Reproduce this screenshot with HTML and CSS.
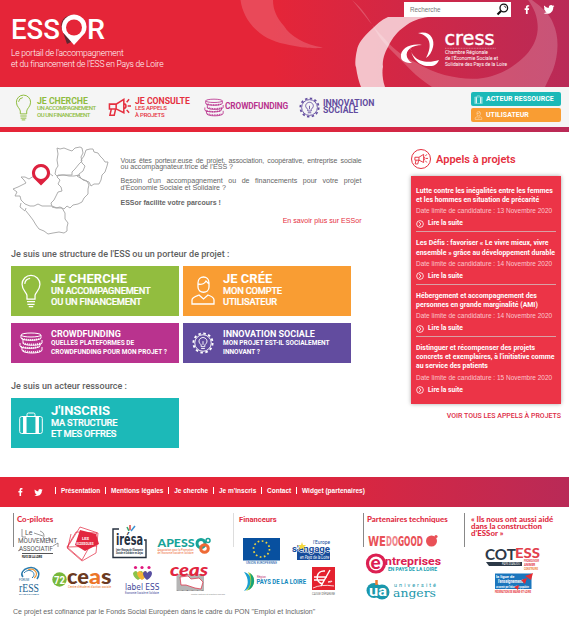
FILE: index.html
```html
<!DOCTYPE html>
<html lang="fr">
<head>
<meta charset="utf-8">
<title>ESSOR</title>
<link rel="stylesheet" href="styles.css">
</head>
<body>
<svg class="defs" aria-hidden="true">
  <symbol id="bulb" viewBox="0 0 24 38"><g fill="none" stroke="currentColor" stroke-width="1.4"><path d="M7.5 28V24C7 20 2 18 2 11.5a10 10 0 0 1 20 0C22 18 17 20 16.5 24v4zM7.5 31h9M8 34h8M9.500 36.500h5M5 11a7 7 0 0 1 6-6"/></g></symbol>
  <symbol id="horn" viewBox="0 0 24 20"><g fill="none" stroke="currentColor" stroke-width="1.600"><path d="M1.500 7h7l8-5v14l-8-4h-7zM3.500 12L2 18.500h4.500L8 12M8.500 7v5M16.500 6.500c3 0 3 5 0 5M19.500 5l2.500-3M20.500 9H24M19.500 13l2.500 3"/></g></symbol>
  <symbol id="coins" viewBox="0 0 24 22"><g fill="none" stroke="currentColor" stroke-width="1"><ellipse cx="12" cy="3" rx="10" ry="2"/><path d="M2 3v3c0 3 20 3 20 0V3M4 8v3c0 3 19 3 19 0V8M1 11v3c0 3 20 3 20 0v-3M3 15v3c0 4 20 4 20 0v-3"/><path stroke-dasharray="1 1" stroke-width="1.800" d="M3 6.500c4 2 14 2 18 0M4 11c4 2 14 2 18 0M2 14.500c4 2 14 2 18 0M4 18.500c4 2 14 2 18 0"/></g></symbol>
  <symbol id="gear" viewBox="0 0 24 24"><g fill="none" stroke="currentColor"><circle cx="12" cy="12" r="9" stroke-width="1"/><circle cx="12" cy="12" r="10.500" stroke-width="2" stroke-dasharray="2.750 2.750"/><path d="M10 16v-2c-5-4-1-8 2-8s7 4 2 8v2zM10 18h4M12 14v-4"/></g></symbol>
  <symbol id="case" viewBox="0 0 24 22"><g fill="none" stroke="currentColor"><rect x=".7" y="4.500" width="22.600" height="17" rx="2"/><path d="M8 4V2.500Q8 1 9.500 1h5Q16 1 16 2.500V4"/><path stroke-width="3.500" d="M5.800 5v16M18.200 5v16"/></g></symbol>
  <symbol id="user" viewBox="0 0 24 30"><g fill="none" stroke="currentColor" stroke-width="1.300"><path d="M7 7c0-8 11-8 11 0v4c0 7-11 7-11 0zM7 8c4 1 7-1 8-3l3 3M1 28v-4c0-3 4-4 7-5l4.500 4 4.500-4c3 1 6 2 6 5v4z"/></g></symbol>
  <symbol id="fb" viewBox="0 0 8 14"><path fill="currentColor" d="M2.300 14V7.800H.3V5.200h2V3.500C2.300 1 3.600.2 5.400.2h2v2.300H6c-.8 0-1 .4-1 1.100v1.600h2.300L7 7.800H5V14z"/></symbol>
  <symbol id="tw" viewBox="0 0 24 20"><path fill="currentColor" d="M24 2.400l-2.500 2.500C21.700 14 15 19.700 7.500 19.700 4.800 19.700 2 19 0 17.500c2.600.2 5-.4 7-2-2-.1-3.900-1.400-4.500-3.400h2.200C2.300 11.500.8 9.500.8 7.100L3 7.700C.8 6 .2 3.300 1.600 1.100c2.500 3 6 5 10.200 5.200C11 2.600 13.500 0 16.700 0c1.400 0 2.600.6 3.500 1.500L23.400.4 21.500 3z"/></symbol>
  <symbol id="more" viewBox="0 0 10 10"><g fill="none" stroke="currentColor"><circle cx="5" cy="5" r="4.200"/><path d="M4 2.500L6 5 4 7.500"/></g></symbol>
</svg>

<header class="top">
  <svg class="swoosh" viewBox="0 0 569 87" aria-hidden="true">
    <g fill="#fff">
      <path opacity=".17" d="M240.500 0C243 19 258 39 285 44C301 48 317 49 323 47.500C305 45 290 36 284 26C277 18 273 10 273 0z"/>
      <path opacity=".2" d="M352 0C364 14 374 28 383 37C396 52 406 58 417 63C438 76 465 81 483 78C495 76 503 72 510 68C519 62 526 56 530 50C542 34 539 14 528 0H532C543 8 550 15 553 23C560 38 558 56 553 70L545 87H432C420 79 411 71 403 62C390 49 382 42 377 33C369 19 362 8 352 0z"/>
      <path opacity=".72" d="M388 17C381 20 376 25 373 28C362 38 358 44 357 50C355 58 355 66 356 67C357 75 359 82 361 87H385C381 75 383 66 383 67C382 60 385 52 388 47C392 38 398 31 404 27C411 21 420 18 428 17z"/>
    </g>
  </svg>
  <div class="brand">
    <svg class="logo" viewBox="0 0 100 32">
      <path fill="#5d2630" d="M61 1C51 2 48 10 52 18l4 12 4-2z"/>
      <text x="0" y="24.500" font-size="28.500" textLength="49" lengthAdjust="spacingAndGlyphs">ESS</text>
      <path fill="#fff" d="M63 .5a12.500 12.500 0 0 0-11 18L63 31l11-12A12.500 12.500 0 0 0 63 .5z"/><circle cx="63" cy="13.500" r="8" fill="#e52538"/>
      <text x="76" y="24.500" font-size="28.500" textLength="18" lengthAdjust="spacingAndGlyphs">R</text>
    </svg>
    <p class="tagline">Le portail de l'accompagnement<br><span>et du financement de l'ESS en Pays de Loire</span></p>
  </div>
  <div class="tools">
    <div class="searchline">
      <div class="search"><span>Recherche</span>
        <svg width="13" height="13" viewBox="0 0 13 13"><g fill="none" stroke="#111"><circle cx="7.800" cy="5" r="3.800" stroke-width="1.300"/><path stroke-width="2.200" d="M5 8l-3.500 3.500"/><path stroke-width=".7" d="M7.800 3q2 0 2 2"/></g></svg>
      </div>
      <svg class="fb"><use href="#fb"/></svg>
      <svg class="tw"><use href="#tw"/></svg>
    </div>
    <svg class="cress" viewBox="400 28 110 42">
      <g fill="#fff">
        <path d="M418 33c12-3 17 6 15 14-1 5-4 9-7 11 5-9 7-22-8-25zM401 57c-1-8 9-14 21-12-10 0-17 5-15 12 1 3 3 5 5 6-6 0-11-2-11-6zM411 46c-2 10 10 20 28 14-2 4-4 6-9 6-10 1-20-8-19-20z"/>
        <text class="din" x="444.500" y="44.500" font-size="20" textLength="50" lengthAdjust="spacingAndGlyphs">cress</text>
        <g class="small" font-size="5.200"><text x="445" y="54" textLength="43" lengthAdjust="spacingAndGlyphs">Chambre Régionale</text>
        <text x="445" y="60" textLength="53" lengthAdjust="spacingAndGlyphs">de l'Économie Sociale et</text>
        <text x="445" y="66" textLength="62" lengthAdjust="spacingAndGlyphs">Solidaire des Pays de la Loire</text></g>
      </g>
      <path stroke="#f0a8b5" stroke-width=".6" stroke-dasharray="1 .6" d="M445 48.300h51"/>
    </svg>
  </div>
</header>

<nav class="nav">
  <a class="n1"><svg><use href="#bulb"/></svg><span><b>JE CHERCHE</b><i>UN ACCOMPAGNEMENT</i><i>OU UN FINANCEMENT</i></span></a>
  <a class="n2"><svg><use href="#horn"/></svg><span><b>JE CONSULTE</b><i>LES APPELS</i><i>À PROJETS</i></span></a>
  <a class="n3"><svg><use href="#coins"/></svg><span><b>CROWDFUNDING</b></span></a>
  <a class="n4"><svg><use href="#gear"/></svg><span><b>INNOVATION</b><b>SOCIALE</b></span></a>
  <div class="accounts">
    <a class="teal"><svg><use href="#case"/></svg>ACTEUR RESSOURCE</a>
    <a class="orange"><svg><use href="#user"/></svg>UTILISATEUR</a>
  </div>
</nav>
<div class="strip"></div>

<main class="main">
  <div class="left">
    <section class="intro">
      <svg class="map" viewBox="12 145 98 91">
        <g fill="none" stroke="#a5a5a5" stroke-width=".9" stroke-linejoin="round">
          <path d="M57 148l3 1 4-1 5 2 3 1 3-3 5-1 2 1 1 5-2 4 1 4-3 3-4 5-3 3 0 3-5 0-5 0-5 1-2-2 1-5 2-3-1-6 1-6z"/>
          <path d="M86 150l4-1 3 0 1 3 4 1 2 3 3 3 2 3 3 0-1 4-2 6-3 3-1 5-2 4-5 0-3 2-2-4-6-2-3-3-1-3 4-3 2-5-3-3-1-3 3-4z"/>
          <path d="M77 176l5 3 5 2 2 4-1 4 0 5-4 4-2 4-4 2-5 1-3 3-3-2-3 3-4-2-4 1-4-1-1-4 3-3 2-4 2-4 4-1-1-4-3-3 2-4-3-3 1-2 6 0 5 1 5 0 5-1z"/>
          <path d="M53 176l-4-3M34 176l-5 3-4-2-4 0 3 3 2 3-4 2-4 2-5 2 4 3-2 4 5 0 1 4 4 4 5 2 4 0 4-2 4 2 5 0 4 0"/>
          <path d="M21 203l-1 4 5 4 1-3M26 211l4 5 3 4 3 5 3 4 5 2 4 3 5-1 6-1 5 1 3-2 0-4 1-4-3-4 0-6-3-5-5 0-5-2"/>
        </g>
        <path fill="#dd213e" fill-rule="evenodd" d="M41 164a9 9 0 0 0-7.500 14L41 185.500l7.500-7.500A9 9 0 0 0 41 164zm0 3a6 6 0 0 1 0 12 6 6 0 0 1 0-12z"/>
      </svg>
      <div class="pitch">
        <p><span class="line">Vous êtes porteur.euse de projet, association, coopérative, entreprise sociale</span> ou accompagnateur.trice de l'ESS ?</p>
        <p>Besoin d'un accompagnement ou de financements pour votre projet d'Économie Sociale et Solidaire ?</p>
        <p class="strong">ESSor facilite votre parcours !</p>
        <p class="link">En savoir plus sur ESSor</p>
      </div>
    </section>
    <h2 class="h-a">Je suis une structure de l'ESS ou un porteur de projet :</h2>
    <div class="tiles">
      <a class="tile green"><svg class="i-bulb"><use href="#bulb"/></svg><span><b>JE CHERCHE</b><i>UN ACCOMPAGNEMENT</i><i>OU UN FINANCEMENT</i></span></a>
      <a class="tile orange"><svg class="i-user"><use href="#user"/></svg><span><b>JE CRÉE</b><i>MON COMPTE</i><i>UTILISATEUR</i></span></a>
      <a class="tile short magenta"><svg class="i-coins"><use href="#coins"/></svg><span><b>CROWDFUNDING</b><i>QUELLES PLATEFORMES DE</i><i>CROWDFUNDING POUR MON PROJET ?</i></span></a>
      <a class="tile short violet"><svg class="i-gear"><use href="#gear"/></svg><span><b>INNOVATION SOCIALE</b><i>MON PROJET EST-IL SOCIALEMENT</i><i>INNOVANT ?</i></span></a>
    </div>
    <h2 class="h-b">Je suis un acteur ressource :</h2>
    <div class="tiles">
      <a class="tile teal"><svg class="i-case"><use href="#case"/></svg><span><b>J'INSCRIS</b><i>MA STRUCTURE</i><i>ET MES OFFRES</i></span></a>
    </div>
  </div>

  <aside class="calls">
    <h2><span class="ring"><svg><use href="#horn"/></svg></span>Appels à projets</h2>
    <div class="card">
      <article><h3>Lutte contre les inégalités entre les femmes<br>et les hommes en situation de précarité</h3><p>Date limite de candidature : 13 Novembre 2020</p><a><svg><use href="#more"/></svg>Lire la suite</a></article>
      <article><h3>Les Défis : favoriser « Le vivre mieux, vivre<br>ensemble » grâce au développement durable</h3><p>Date limite de candidature : 14 Novembre 2020</p><a><svg><use href="#more"/></svg>Lire la suite</a></article>
      <article><h3>Hébergement et accompagnement des<br>personnes en grande marginalité (AMI)</h3><p>Date limite de candidature : 14 Novembre 2020</p><a><svg><use href="#more"/></svg>Lire la suite</a></article>
      <article><h3>Distinguer et récompenser des projets<br>concrets et exemplaires, à l'initiative comme<br>au service des patients</h3><p>Date limite de candidature : 15 Novembre 2020</p><a><svg><use href="#more"/></svg>Lire la suite</a></article>
    </div>
    <a class="all">VOIR TOUS LES APPELS À PROJETS</a>
  </aside>
</main>

<div class="footbar">
  <svg class="fb"><use href="#fb"/></svg><svg class="tw"><use href="#tw"/></svg>
  <ul><li>Présentation</li><li>Mentions légales</li><li>Je cherche</li><li>Je m'inscris</li><li>Contact</li><li>Widget (partenaires)</li></ul>
</div>

<footer class="partners">
  <section class="c1">
    <h4>Co-pilotes</h4>
    <div class="logos">
      <svg width="46" height="38" viewBox="16 525 46 38">
        <g fill="none" stroke="#555" stroke-width=".6"><path d="M21 529v8h4M39 531q6 2 3 8M33 533l9 3M20 549l-3 2M48 541v-4M52 546l5-3v4"/></g>
        <g fill="#555"><text x="24" y="535" font-size="7">Le</text><text x="17" y="543" font-size="7" textLength="39" lengthAdjust="spacingAndGlyphs">MOUVEMENT</text><text x="18" y="551" font-size="7" textLength="34" lengthAdjust="spacingAndGlyphs">ASSOCIATIF</text></g>
        <path stroke="#555" d="M21 553.500h31"/><text x="21" y="558" font-size="3.200" font-weight="700" textLength="20" lengthAdjust="spacingAndGlyphs">PAYS DE LA LOIRE</text>
      </svg>
      <svg width="45" height="38" viewBox="62 525 45 38">
        <path fill="none" stroke="#e2263f" stroke-width=".7" d="M79 527l18 6-2 20-14 8-15-13zM66 547l9-15 21 1-15 27zM70 534l-3 13 29-1"/>
        <path fill="#e2263f" d="M79 530l16 4 3 10-14 7-10-6z"/>
        <g fill="#fff" font-size="4" font-weight="700"><text x="81" y="540">LES</text><text x="75.500" y="545" textLength="17" lengthAdjust="spacingAndGlyphs">ECOSSOLIES</text></g>
      </svg>
      <svg width="45" height="38" viewBox="107 525 45 38">
        <path fill="none" stroke="#26313f" stroke-width="1.400" d="M118 529h-6v28.500h33V540H143"/>
        <text class="cond" x="115" y="545" font-size="16" font-weight="700" fill="#26313f" textLength="27" lengthAdjust="spacingAndGlyphs">irésa</text>
        <path stroke="#3aa66b" stroke-width="1.500" d="M128 531l-2-4"/><path stroke="#e2463f" stroke-width="1.500" d="M129 530v-5"/><path stroke="#3b8fd0" stroke-width="1.500" d="M130 531l4-5"/>
        <g font-size="2.800" font-weight="700" fill="#26313f"><text x="115" y="550.500" textLength="27" lengthAdjust="spacingAndGlyphs">Inter-Réseau de l'Économie</text><text x="115" y="554" textLength="27" lengthAdjust="spacingAndGlyphs">Sociale et Solidaire en Anjou</text></g>
      </svg>
      <svg width="64" height="38" viewBox="152 525 64 38">
        <text class="lato" x="156.500" y="547" font-size="11" font-weight="900" fill="#17a398" textLength="37" lengthAdjust="spacingAndGlyphs">APESS</text>
        <g fill="none" stroke-width="3"><circle cx="200" cy="543.500" r="4" stroke="#17a398"/><circle cx="203.500" cy="548.500" r="3.800" stroke="#ee6a35"/><circle cx="207" cy="540.500" r="2" stroke="#17a398" stroke-width="1.500"/></g>
        <g font-size="2.800" fill="#ee6a35"><text x="156.500" y="550.500" textLength="36" lengthAdjust="spacingAndGlyphs">Association pour la Promotion</text><text x="156.500" y="553.700" textLength="36" lengthAdjust="spacingAndGlyphs">de l'Économie Sociale et Solidaire</text></g>
      </svg>
      <svg width="30" height="37" viewBox="16 563 30 37">
        <path fill="none" stroke="#2d7cad" stroke-width="1.500" d="M36 579c5-7-2-13-9-11-5 1-8 6-5 9"/><path fill="none" stroke="#ef9b3c" stroke-width="1.200" d="M27 570c6-3 12 4 6 8"/><path fill="none" stroke="#2d7cad" d="M23 573c5-6 14 0 8 5"/>
        <text class="serif" x="18" y="591.500" font-size="12" fill="#1d6391" textLength="20" lengthAdjust="spacingAndGlyphs">rESS</text><text x="18" y="581" font-size="3" fill="#1d6391">FORUM</text><text x="18" y="595" font-size="2.500" fill="#1d6391" textLength="20">DU PAYS DU MANS</text>
      </svg>
      <svg width="71" height="37" viewBox="46 563 71 37">
        <circle cx="58.500" cy="579.500" r="7.200" fill="#78b83b"/><text x="53" y="583.500" font-size="11" font-weight="700" fill="#fff" textLength="11" lengthAdjust="spacingAndGlyphs">72</text>
        <g class="lato" font-weight="900" font-size="20"><text x="66" y="583.500" fill="#6b3a20" textLength="22" lengthAdjust="spacingAndGlyphs">ce</text><text x="88" y="583.500" fill="#ec7628" textLength="12" lengthAdjust="spacingAndGlyphs">a</text><text x="100" y="583.500" fill="#6b3a20" textLength="10.500" lengthAdjust="spacingAndGlyphs">s</text></g>
        <text x="67" y="587.500" font-size="2.800" fill="#ec7628" textLength="43" lengthAdjust="spacingAndGlyphs">Centre d'étude et d'action sociale</text>
      </svg>
      <svg width="47" height="37" viewBox="117 563 47 37">
        <g fill="#e0187e"><circle cx="134.500" cy="567.500" r="1.600"/><circle cx="141" cy="567.500" r="1.600"/><circle cx="148" cy="567.500" r="1.600"/></g>
        <path fill="#8bc34a" d="M132 573q3-4 5 0 4-4 5 0 0 4-5 7-5-3-5-7z"/><path fill="#f5b335" d="M136 573q3-4 5 0 4-4 5 0 0 4-5 7-5-3-5-7z"/><path fill="#574ea0" d="M142 573q3-4 4 0 4-4 5 0 0 4-5 7-4-3-4-7z"/>
        <text class="cond" x="124" y="589.500" font-size="9" fill="#3f4799" textLength="34.500" lengthAdjust="spacingAndGlyphs">label ESS</text><text x="124" y="594" font-size="2.800" fill="#3f4799" textLength="34" lengthAdjust="spacingAndGlyphs">Économie Sociale et Solidaire</text>
      </svg>
      <svg width="64" height="37" viewBox="164 563 64 37">
        <path fill="#b5b5b5" d="M175.500 574h27.500v17h-27.500z"/><path fill="#fff" stroke="#e2263f" stroke-width=".7" d="M179 577l8-1 3 3 8-1 4 4-2 7-6-1-9-3-5 0z"/>
        <text class="lato" x="169" y="575.500" font-size="17" font-weight="900" font-style="italic" fill="#e2263f" textLength="38" lengthAdjust="spacingAndGlyphs">ceas</text>
        <g font-size="2.500" fill="#888"><text x="176" y="591" fill="#666" textLength="26">FRANCE</text><text x="190" y="594.500" textLength="34" lengthAdjust="spacingAndGlyphs">centre d'étude et d'action sociale</text></g>
      </svg>
    </div>
  </section>
  <section class="c2">
    <h4>Financeurs</h4>
    <div class="logos">
      <svg width="46" height="38" viewBox="240 527 46 38">
        <path fill="#08509f" d="M243 538h37v22.500h-37z"/><circle cx="261.500" cy="549" r="8" fill="none" stroke="#f4d83c" stroke-width="1.700" stroke-dasharray="1.700 2.489"/><text x="246" y="564" font-size="3.500" fill="#08509f" textLength="31" lengthAdjust="spacingAndGlyphs">UNION EUROPÉENNE</text>
      </svg>
      <svg width="54" height="38" viewBox="286 527 54 38">
        <path fill="#164c9b" d="M297 549l33 2v9h-33z"/><g fill="#164c9b" font-weight="700"><text x="313" y="543.500" font-size="5.500" textLength="17" lengthAdjust="spacingAndGlyphs" font-weight="400">l'Europe</text><text x="292" y="551.500" font-size="9.500" textLength="38" lengthAdjust="spacingAndGlyphs" stroke="#fff" stroke-width="1.200" paint-order="stroke">s'engage</text></g>
        <path fill="#f4d83c" d="M302 542l1 3 3 0-2 2 1 3-3-2-3 2 1-3-2-2h3z"/><text x="300" y="559" font-size="5" font-style="italic" fill="#fff" textLength="29" lengthAdjust="spacingAndGlyphs">en Pays de la Loire</text>
      </svg>
      <svg width="69" height="35" viewBox="240 565 69 35">
        <path fill="#1b9fd0" d="M244 572c9 2 11 15 0 19 5-6 5-12 0-19z"/><path fill="#aacf37" d="M248 572c9 4 8 16-2 19 5-5 6-11 2-19z"/><path fill="#15a37c" d="M250 573c7 5 4 15-2 17 4-5 4-11 2-17z"/>
        <text x="257" y="577.500" font-size="3" fill="#c13a75" textLength="9">Région</text><text x="256.500" y="584" font-size="6.500" font-weight="700" fill="#1388bd" textLength="49.500" lengthAdjust="spacingAndGlyphs">PAYS DE LA LOIRE</text>
      </svg>
      <svg width="31" height="35" viewBox="309 565 31 35">
        <path fill="#e4222f" d="M312 567h23v23h-23z"/><g stroke="#fff" fill="none"><path stroke-width="1.500" d="M325 571c-9-1-11 11-2 13M314 577h13M314 580h10M330 570l-9 16"/><path stroke-width=".8" d="M328 582q6-2 3 0zM313 588q8-4 21-2"/></g><text x="312" y="595" font-size="3" fill="#666" textLength="23" lengthAdjust="spacingAndGlyphs">CAISSE D'ÉPARGNE</text>
      </svg>
    </div>
  </section>
  <section class="c3">
    <h4>Partenaires techniques</h4>
    <div class="logos">
      <svg width="80" height="26" viewBox="365 526 80 26">
        <g class="cond" font-weight="700" font-size="14" fill="#e95157"><text x="369" y="546" textLength="18" lengthAdjust="spacingAndGlyphs">WE</text><text x="387" y="546" textLength="12" lengthAdjust="spacingAndGlyphs" fill="#f0858a">DO</text><text x="399" y="546" textLength="25" lengthAdjust="spacingAndGlyphs">GOOD</text></g><circle cx="432.500" cy="541" r="5.500" fill="#e95157"/><circle cx="437" cy="536.500" r="1.600" fill="#e95157"/>
      </svg>
      <svg width="80" height="25" viewBox="365 552 80 25">
        <circle cx="377" cy="563.500" r="8.500" fill="#fff" stroke="#dc2052" stroke-width="3.200"/><text class="lato" x="371.500" y="568.500" font-size="19" font-weight="900" fill="#dc2052">e</text><text x="386" y="564.500" font-size="11" font-weight="700" fill="#dc2052" textLength="56" lengthAdjust="spacingAndGlyphs">ntreprises</text><text x="389" y="570.500" font-size="4.800" font-weight="700" fill="#1aa1b1" textLength="49" lengthAdjust="spacingAndGlyphs">EN PAYS DE LA LOIRE</text>
      </svg>
      <svg width="80" height="25" viewBox="365 577 80 25">
        <g fill="#1a97ac"><circle cx="375" cy="590.500" r="7.500"/><circle cx="383" cy="592" r="7.500"/></g><path stroke="#ee7b31" stroke-width="2.500" d="M377.500 580v5"/><text x="370" y="596" font-size="14" font-weight="700" fill="#fff" textLength="18" lengthAdjust="spacingAndGlyphs">ua</text><text x="395" y="587" font-size="5.500" fill="#1a97ac" textLength="42">université</text><text class="slab" x="394" y="597" font-size="11.500" fill="#1a97ac" textLength="43" lengthAdjust="spacingAndGlyphs">angers</text>
      </svg>
    </div>
  </section>
  <section class="c4">
    <h4>« Ils nous ont aussi aidé<br>dans la construction<br>d'ESSor »</h4>
    <div class="logos">
      <svg width="80" height="28" viewBox="465 544 80 28">
        <g class="lato" font-size="16"><text x="485" y="560" font-weight="700" fill="#2c3947" textLength="31" lengthAdjust="spacingAndGlyphs">COT</text><text x="515" y="557.500" font-size="14" font-weight="900" fill="#e2404c" textLength="25" lengthAdjust="spacingAndGlyphs">ESS</text></g><path fill="#2c3947" d="M486 562h36v4h-33z"/><text x="502" y="565.300" font-size="3" fill="#fff" textLength="18" lengthAdjust="spacingAndGlyphs">PAYS D'ANJOU</text><g font-size="3" font-weight="700" fill="#e2404c"><text x="524" y="561.500" textLength="15" lengthAdjust="spacingAndGlyphs">PROMOUVOIR</text><text x="524" y="565.500">ANIMER</text><text x="524" y="569.500" fill="#ee7b31" textLength="14" lengthAdjust="spacingAndGlyphs">CONSTRUIRE</text></g>
      </svg>
      <svg width="80" height="24" viewBox="465 572 80 24">
        <path fill="#1b76bd" d="M495 573.500h36.500V589H495z"/><g fill="#fff" font-weight="700"><text x="496" y="577.700" font-size="4">la ligue de</text><text x="498" y="582.500" font-size="4.500" textLength="25" lengthAdjust="spacingAndGlyphs">l'enseignement</text><text x="496" y="588" font-size="3" textLength="33" lengthAdjust="spacingAndGlyphs">un avenir par l'éducation populaire</text></g><g fill="#e52d32"><path d="M533 573l-8 3 6 4zM527 578l-6 2 4 4zM519 585l-5 2 4 3z"/></g><text x="495" y="593" font-size="3" font-weight="700" fill="#e52d32" textLength="36" lengthAdjust="spacingAndGlyphs">FÉDÉRATION DE MAINE-ET-LOIRE</text>
      </svg>
    </div>
  </section>
</footer>
<p class="legal">Ce projet est cofinancé par le Fonds Social Européen dans le cadre du PON "Emploi et Inclusion"</p>
</body>
</html>
```
FILE: styles.css
```css
* { box-sizing: border-box; }
body, p, h2, h3, h4, ul { margin: 0; padding: 0; }
body { width: 569px; height: 625px; overflow: hidden; background: #fff; font-family: Roboto, "Liberation Sans", sans-serif; color: #666; }
i { font-style: normal; }
svg { display: block; flex: none; }
.defs { position: absolute; width: 0; height: 0; }
.top, .strip, .footbar { background: linear-gradient(90deg, #e52538 48%, #b92a57 100%); }

.top { position: relative; height: 87px; display: flex; justify-content: space-between; color: #fff; }
.swoosh { position: absolute; inset: 0; width: 569px; height: 87px; }
.brand { position: relative; padding: 14px 0 0 11px; }
.logo { width: 100px; height: 32px; font-weight: 500; fill: #fff; }
.tagline { font-size: 8.5px; line-height: 10.5px; font-weight: 300; margin-top: 2px; white-space: nowrap; letter-spacing: -.22px; }
.tools { position: relative; width: 169px; padding-top: 2px; }
.searchline { display: flex; align-items: center; padding-left: 4px; height: 15px; }
.search { width: 107px; height: 15px; background: #fff; color: #777; display: flex; justify-content: space-between; align-items: center; padding: 0 2px 0 6px; font: 6.3px "Liberation Sans", sans-serif; }
.searchline .fb { width: 6px; height: 9px; margin-left: 13px; }
.searchline .tw { width: 12px; height: 9px; margin-left: 13px; }
.cress { width: 110px; height: 42px; margin-top: 11px; font-weight: 500; overflow: visible; }
.din { font-family: "DejaVu Sans Condensed", Roboto, sans-serif; font-weight: 400; stroke: #fff; stroke-width: .4; }
.small { font-weight: 400; }

.nav { height: 40px; background: #f5f5f5; display: flex; align-items: center; }
.nav > a { display: flex; align-items: center; }
.nav > a b, .nav > a i { display: block; white-space: nowrap; }
.nav b { font-size: 8.7px; line-height: 7.5px; font-weight: 700; }
.nav .n1 b, .nav .n2 b { margin-top: 2px; }
.nav i { font-size: 6px; line-height: 6.5px; font-weight: 500; letter-spacing: -.2px; }
.n1 { color: #8fbc3f; width: 93px; padding-left: 15px; }
.nav .n1 i { letter-spacing: -.45px; }
.n1 svg { width: 17px; height: 27px; margin-right: 5px; }
.n2 { color: #e5303f; width: 111px; padding-left: 15px; }
.n2 svg { width: 23px; height: 20px; margin-right: 4px; }
.n3 { color: #b9338e; width: 95px; }
.nav .n3 b { font-size: 8.3px; letter-spacing: -.1px; }
.n3 svg { width: 20px; height: 19px; margin-right: 1px; }
.n4 { color: #624c9f; }
.n4 svg { width: 21px; height: 21px; margin-right: 3px; }
.accounts { margin-left: auto; margin-right: 8px; display: grid; gap: 2px; }
.accounts a { width: 90px; height: 14px; border-radius: 2px; color: #fff; font-size: 7px; font-weight: 700; display: flex; align-items: center; padding-left: 3px; gap: 3px; white-space: nowrap; }
.accounts svg { width: 9px; height: 9px; }
.teal { background: #1cb9b8; }
.orange { background: #f99d33; }
.strip { height: 5px; }

.main { height: 345px; display: flex; justify-content: space-between; padding: 0 8px 0 11px; }
.left { width: 340px; }
.intro { display: flex; height: 116px; padding-top: 13px; }
.map { width: 98px; height: 91px; margin-left: 1px; }
.pitch { flex: none; margin-left: 10.5px; width: 241px; padding-top: 12px; font: 7.1px/7px "Liberation Sans", sans-serif; text-align: justify; }
.pitch p { margin-bottom: 7px; }
.pitch .line { display: block; white-space: nowrap; font-size: 7px; letter-spacing: -.12px; text-align-last: justify; }
.pitch .strong { font-weight: 700; font-size: 7px; }
.pitch .link { color: #e5303f; text-align: right; margin-top: 12px; }
.left h2 { font-size: 9px; line-height: 12px; font-weight: 500; white-space: nowrap; color: #606060; letter-spacing: .02px; }
.tiles { display: grid; grid-template-columns: 168px 168px; gap: 7px 4px; margin-top: 6px; }
.h-b { margin-top: 17px; }
.h-b + .tiles { margin-top: 6px; }
.tile { height: 50px; color: #fff; display: flex; align-items: center; }
.tile b, .tile i { display: block; white-space: nowrap; }
.tile b { font-size: 13px; line-height: 13px; font-weight: 700; margin: -2px 0 1.500px; }
.tile i { font-size: 9.3px; line-height: 10.8px; font-weight: 500; letter-spacing: -.2px; -webkit-text-stroke: .2px #fff; }
.tile svg { width: 24px; height: 36px; margin: 0 8px; }
.tile .i-bulb { height: 34px; }
.tile .i-user { height: 30px; }
.tile .i-coins, .tile .i-gear { height: 22px; }
.tile .i-case { height: 24px; }
.short { height: 40px; }
.short b { font-size: 9px; line-height: 9px; margin: 0; }
.short i { font-size: 6.5px; line-height: 8.2px; font-weight: 700; letter-spacing: 0; -webkit-text-stroke: 0; }
.green { background: #92bd3f; }
.magenta { background: #b9338e; }
.violet { background: #624c9f; }

.calls { width: 150px; padding-top: 17px; }
.calls h2 { display: flex; align-items: center; gap: 5px; height: 20px; color: #e5303f; font-size: 11px; font-weight: 600; }
.ring { width: 20px; height: 20px; border: 1px solid #e5303f; border-radius: 50%; display: grid; place-items: center; }
.ring svg { width: 14px; height: 12px; }
.card { margin-top: 7px; height: 228px; background: #ec3447; box-shadow: 0 0 4px rgba(0,0,0,.35); color: #fff; padding: 4px 5px; }
.card article { padding-top: 7px; height: 52.3px; border-bottom: 1px solid #d9a0a5; }
.card article:last-child { border: 0; }
.card h3 { font-size: 6.9px; line-height: 9.2px; font-weight: 700; white-space: nowrap; margin: 0; letter-spacing: .02px; }
.card p { font: 6.5px/10px "Liberation Sans", sans-serif; color: #fbc5cb; white-space: nowrap; margin-top: 1px; }
.card a { display: flex; align-items: center; gap: 4px; font-size: 6.7px; font-weight: 700; line-height: 9px; margin-top: 3px; }
.card svg { width: 8px; height: 8px; }
.all { display: block; text-align: right; color: #dd2a45; font-size: 7px; font-weight: 500; line-height: 10px; margin-top: 7px; white-space: nowrap; }

.footbar { height: 30px; display: flex; align-items: center; color: #fff; padding-left: 18px; }
.footbar .fb { width: 5px; height: 8px; }
.footbar .tw { width: 9px; height: 7px; margin-left: 11px; }
.footbar ul { display: flex; list-style: none; margin: -3px 0 0 12px; font: 700 6.5px/7px "Liberation Sans", sans-serif; }
.footbar li { border-left: 1px solid #fff; padding: 0 4.9px; white-space: nowrap; }

.partners { display: flex; height: 97px; padding: 6px 0 0 13px; }
.partners section { height: 34px; border-left: 1px solid #888; padding-left: 3px; }
.partners h4 { height: 12px; font: 900 7.9px/7px Lato, sans-serif; color: #df2d44; white-space: nowrap; padding-top: 3px; }
.logos { display: flex; flex-wrap: wrap; }
.logos text { white-space: pre; }
.c1 { width: 220px; }
.c1 .logos { width: 228px; margin-right: -12px; }
.partners .c2 { width: 130px; border-color: #ddd; padding-left: 6px; }
.c2 h4, .c2 .logos { width: 100px; }
.partners .c2 h4 { height: 14px; font: 700 7.6px/7px Roboto, sans-serif; margin-left: -1px; }
.c3 { width: 101px; }
.c3 h4 { height: 13px; }
.c3 .logos { width: 80px; margin-left: -3px; }
.c4 { width: 105px; }
.partners .c4 { padding-left: 6px; }
.partners .c4 h4 { height: 31px; }
.c4 .logos { width: 80px; margin-left: -6px; }
.lato { font-family: Lato, sans-serif; }
.serif { font-family: "Liberation Serif", serif; }
.slab { font-family: "DejaVu Serif", serif; }
.cond { font-family: "DejaVu Sans Condensed", Roboto, sans-serif; }
.legal { padding-left: 13px; font: 7px/9px "Liberation Sans", sans-serif; margin-top: 3px; white-space: nowrap; }
```
